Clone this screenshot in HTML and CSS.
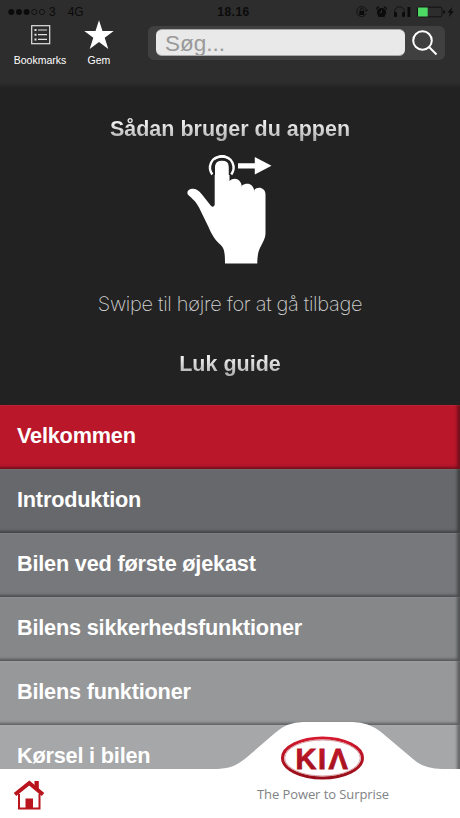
FILE: index.html
```
<!DOCTYPE html>
<html lang="da">
<head>
  <meta charset="UTF-8" />
  <meta name="viewport" content="width=device-width, initial-scale=1.0" />
  <title>Kia</title>
  <link rel="stylesheet" href="styles.css">
</head>
<body>
  <div class="app">
    <header class="header">
      <div class="status-bar">
        <div class="carrier">
          <svg width="39" height="8" viewBox="0 0 39 8">
            <circle cx="3.3" cy="4" r="3" />
            <circle cx="11" cy="4" r="3" />
            <circle cx="18.6" cy="4" r="3" />
            <circle cx="26.3" cy="4" r="2.6" class="ring" />
            <circle cx="34" cy="4" r="2.6" class="ring" />
          </svg>
          <span class="name">3</span>
          <span>4G</span>
        </div>
        <span class="time">18.16</span>
        <svg class="indicators" width="100" height="14" viewBox="0 0 100 14">
          <path class="line" d="M10.2 8.8A5 5 0 1 1 10.6 5.5M8.9 5l1.8 1.2L12 4.3" />
          <rect x="3.3" y="6" width="5" height="4" />
          <path class="line" d="M4.3 6V4.7a1.5 1.5 0 0 1 3 0V6" />
          <circle cx="25.5" cy="7.5" r="4.6" />
          <path d="M20.3 4.8a2.4 2.4 0 0 1 3.4-3zM30.7 4.8a2.4 2.4 0 0 0-3.4-3zM21.5 12.6l2-2 1 1zM29.5 12.6l-2-2-1 1z" />
          <path class="hand" d="M25.5 4.8v3h-2" />
          <path class="line" d="M39 10.5C37.4 5 40 1.8 43.5 1.8S49.5 5 48 10.5" />
          <rect x="38" y="7" width="3" height="5" rx="1" />
          <rect x="46" y="7" width="3" height="5" rx="1" />
          <rect x="51.5" y="2" width="2.8" height="10" />
          <rect class="line" x="61.5" y="2.2" width="24.5" height="9.6" rx="1.5" />
          <rect class="charge" x="62" y="2.5" width="9.7" height="9" />
          <path d="M87.4 5v4q1.8-.5 1.8-2t-1.8-2zM96.5 2l-5 5.6h2.8L92.7 12.2l5-6H95z" />
        </svg>
      </div>
      <div class="toolbar">
        <a class="tool bookmarks">
          <svg width="20" height="20" viewBox="0 0 20 20">
            <rect x=".7" y=".7" width="18" height="18" />
            <path d="M7 5h9M7 9.7h9M7 14.4h9" />
            <path class="dots" d="M3.5 5h2M3.5 9.7h2M3.5 14.4h2" />
          </svg>
          <span>Bookmarks</span>
        </a>
        <a class="tool save">
          <svg width="30" height="30" viewBox="0 0 30 30">
            <path d="M15 .3l3.5 10.8h11.2l-9 6.7 3.600 11.200-9.300-6.900-9.300 6.900 3.600-11.200-9-6.700h11.200z" />
          </svg>
          <span>Gem</span>
        </a>
        <div class="search">
          <input type="text" placeholder="Søg...">
          <svg width="28" height="28" viewBox="0 0 28 28">
            <circle cx="11.5" cy="11.5" r="9.3" />
            <path d="M18 18l7.500 7.500" />
          </svg>
        </div>
      </div>
    </header>

    <section class="guide">
      <h1>Sådan bruger du appen</h1>
      <svg class="swipe" width="86" height="110" viewBox="0 0 86 110">
        <path d="M27.700 49.500c-.7 3-3 2.700-4.600.3L15 39.500C11 34.500 7.500 33.300 4 34c-3.700.8-4.500 4-2.700 6 3.700 3.500 7.700 6.500 10.700 12.500l9.500 19.500c4 9 6.700 13 12 17.700 3.500 3.200 4.500 6.800 4.500 18.800h32.300c0-12 2.500-15 5.200-20.500 2-4.200 3-6 3-11V39.500c0-7-8-8.500-11.200-4.500v2c-.3-9-8-10-12.300-6.500v2c-.5-9-8-11-12.500-6.500V4.500c-1.500-6-12.800-6-14.800 0z" />
        <path class="gap" d="M27 20V10.500c0-8.500 16-8.500 16 0V20" />
        <path class="touch" d="M25.300 19.500C20.200 12 24 1.400 34.800 1.400S49.300 12 44.300 19.500" />
        <path d="M28 12.500c0-8.500 13.500-8.500 13.500 0v30H28zM51 8.300h16.800V2L84.500 10.800 67.800 19.400v-6H51z" />
      </svg>
      <p>Swipe til højre for at gå tilbage</p>
      <a class="close">Luk guide</a>
    </section>

    <nav class="menu">
      <a class="active">Velkommen</a>
      <a>Introduktion</a>
      <a>Bilen ved første øjekast</a>
      <a>Bilens sikkerhedsfunktioner</a>
      <a>Bilens funktioner</a>
      <a>Kørsel i bilen</a>
    </nav>

    <footer class="footer">
      <svg class="tab" width="244" height="47" viewBox="0 0 244 47">
        <path d="M0 47C18 47 24 43 33 36L62 11Q74 0 90 0H140Q155 0 168 10L200 37Q211 47 229 47z" />
      </svg>
      <div class="bar">
        <svg class="home" width="32" height="31" viewBox="0 0 32 31">
          <path class="walls" d="M6 14v14.500h20.500V14" />
          <path class="roof" d="M2 14.500L16.300 3l13.700 11.500" />
          <path d="M21.500 1h4.300v9.500l-4.300-3.500zM12.500 18.500h7.500v10h-7.500z" />
        </svg>
        <div class="brand">
          <svg width="86" height="44" viewBox="0 0 86 44">
            <defs>
              <linearGradient id="kia-red" x1="0" y1="0" x2="0" y2="1">
                <stop offset="0" stop-color="#d4182d" />
                <stop offset="1" stop-color="#960f1a" />
              </linearGradient>
            </defs>
            <ellipse cx="42.5" cy="22" rx="40" ry="20" fill="#fff" stroke="url(#kia-red)" stroke-width="3" />
            <ellipse cx="42.500" cy="22" rx="37.800" ry="18" fill="none" stroke="#d79ba0" stroke-width="1" />
            <text y="32.500" x="15.500 38 48.500">KIΛ</text>
          </svg>
          <span>The Power to Surprise</span>
        </div>
      </div>
    </footer>
  </div>
</body>
</html>
```
FILE: styles.css
```
* {
  box-sizing: border-box;
}
body {
  margin: 0;
  font-family: "Liberation Sans", Arial, sans-serif;
  color: #fff;
}
.app {
  position: relative;
  height: 818px;
  overflow: hidden;
  background: #222;
}
.header {
  height: 88px;
  background: linear-gradient(#2d2d2d 82px, #222);
}
.status-bar {
  display: flex;
  justify-content: space-between;
  align-items: center;
  height: 24px;
  padding: 0 4px 0 8px;
  color: #0b0b0b;
  font-size: 12px;
}
.status-bar svg {
  fill: #0b0b0b;
}
.carrier {
  display: flex;
  align-items: center;
  width: 100px;
}
.carrier .name {
  margin: 0 12px 0 2px;
}
.status-bar .ring,
.status-bar .line {
  fill: none;
  stroke: #0b0b0b;
  stroke-width: 0.8;
}
.status-bar .hand {
  fill: none;
  stroke: #2d2d2d;
}
.status-bar .charge {
  fill: #4cd964;
}
.time {
  padding-left: 3px;
  font-weight: bold;
  letter-spacing: 0.5px;
}
.toolbar {
  display: flex;
  align-items: flex-start;
}
.tool {
  display: flex;
  flex-direction: column;
  align-items: center;
  justify-content: space-between;
  height: 43px;
  font-size: 10.5px;
  line-height: 13px;
}
.bookmarks {
  width: 52px;
  margin-left: 14px;
}
.bookmarks svg {
  margin: 1px 0 0 1px;
  fill: none;
  stroke: #e2e2e2;
  stroke-width: 1.2;
}
.bookmarks .dots {
  stroke-width: 2;
}
.save {
  width: 30px;
  height: 48px;
  margin: -5px 0 0 18px;
}
.save svg {
  margin-top: 1px;
  fill: #fff;
}
.search {
  display: flex;
  align-items: center;
  width: 297px;
  height: 34px;
  margin: 2px 0 0 34px;
  padding-left: 8px;
  background: #404040;
  border-radius: 6px;
}
.search input {
  width: 249px;
  height: 27px;
  margin-top: -1px;
  padding: 2px 9px 0;
  border: 1px solid #aaa;
  border-width: 1px 0;
  border-radius: 6px;
  background: #e9e9e9;
  font: 22.5px "Liberation Sans", Arial, sans-serif;
}
.search input::placeholder {
  color: #999;
}
.search svg {
  margin: -1px 0 0 6px;
  fill: none;
  stroke: #fff;
  stroke-width: 2;
}
.guide {
  display: flex;
  flex-direction: column;
  align-items: center;
  height: 317px;
  padding-top: 29px;
}
.guide h1,
.close {
  margin: 0;
  font-size: 21.5px;
  font-weight: bold;
  line-height: 24px;
  background: linear-gradient(#eee 25%, #aaa);
  -webkit-background-clip: text;
  background-clip: text;
  color: transparent;
}
.swipe {
  margin: 14px 0 0 0;
  fill: #fff;
}
.swipe .touch {
  fill: none;
  stroke: #fff;
  stroke-width: 2.4;
}
.swipe .gap {
  fill: none;
  stroke: #222;
  stroke-width: 3;
}
.guide p {
  margin: 27px 0 0;
  font: 200 20px/24px Inter, sans-serif;
  letter-spacing: -0.3px;
  color: #d0d0d0;
}
.close {
  margin-top: 36px;
}
.menu a {
  display: flex;
  align-items: center;
  height: 64px;
  padding: 0 17px 3px;
  font-size: 21.7px;
  font-weight: bold;
  letter-spacing: -0.2px;
  background: #98999b;
  box-shadow: inset 0 1px 1px rgba(255, 255, 255, 0.06), inset -4px -3px 3px -1px rgba(0, 0, 0, 0.38);
}
.menu a.active {
  background: #ba172b;
}
.menu a:nth-child(2) {
  background: #67686b;
}
.menu a:nth-child(3) {
  background: #77787b;
}
.menu a:nth-child(4) {
  background: #868789;
}
.menu a:nth-child(5) {
  background: #97989a;
}
.menu a:nth-child(6) {
  background: #a6a7a9;
}
/* the footer sits on top of the scrolling menu */
.footer {
  position: absolute;
  left: 0;
  right: 0;
  bottom: 0;
}
.tab {
  display: block;
  margin-left: 213px;
  fill: #fff;
}
.bar {
  display: flex;
  height: 49px;
  padding-left: 13px;
  background: #fff;
}
.home {
  margin-top: 11px;
  fill: #ba141d;
}
.home .walls,
.home .roof {
  fill: none;
  stroke: #ba141d;
  stroke-width: 2;
}
.home .roof {
  stroke-width: 4;
}
.brand {
  display: flex;
  flex-direction: column;
  align-items: center;
  width: 140px;
  margin: -33px 0 0 208px;
  font: 13px "Open Sans", sans-serif;
  letter-spacing: -0.08px;
  color: #808285;
}
.brand text {
  font: bold 29px "Liberation Sans", Arial, sans-serif;
  fill: url(#kia-red);
  stroke: #b01425;
  stroke-width: 0.8;
}
.brand span {
  margin-top: 5px;
  white-space: nowrap;
}
```
